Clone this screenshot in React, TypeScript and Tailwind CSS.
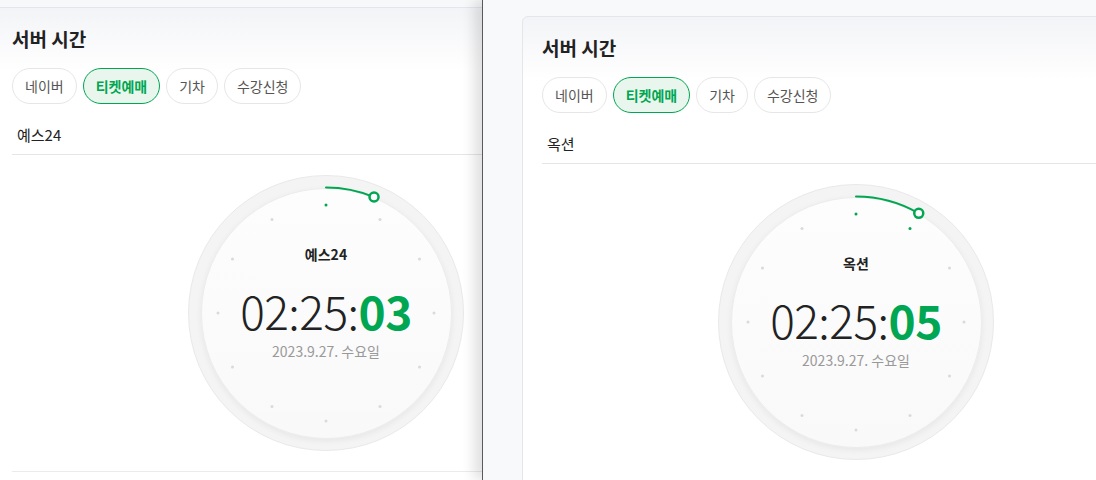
import React from "react";

const GREEN = "#00a651";

function Clock({ name, sec, angle, greens }: { name: string; sec: string; angle: number; greens: number }) {
  const c = 138;
  const ticks = Array.from({ length: 12 }, (_, i) => {
    const a = (i * 30 * Math.PI) / 180;
    return { x: c + 108 * Math.sin(a), y: c - 108 * Math.cos(a), g: i < greens };
  });
  const R = 125.5;
  const ra = (angle * Math.PI) / 180;
  const ex = c + R * Math.sin(ra);
  const ey = c - R * Math.cos(ra);
  return (
    <div className="relative w-[276px] h-[276px]">
      <div className="w-[276px] h-[276px] rounded-full bg-[#f4f4f4] border border-[#e9e9e9] flex items-center justify-center">
        <div className="w-[251px] h-[251px] rounded-full bg-[linear-gradient(to_bottom,#fdfdfd,#f9f9f9)] border border-[#ececec] shadow-[0_2px_6px_rgba(0,0,0,0.06)] flex flex-col items-center justify-center pb-[21px]">
          <div className="h-5 leading-5 text-[14px] font-bold text-[#222]">{name}</div>
          <div className="mt-[24px] h-[44px] leading-[44px] text-[46px] text-[#222] font-light tracking-[-0.5px] font-['Noto_Sans_CJK_KR',sans-serif]">
            02:25:<span className="font-bold" style={{ color: GREEN }}>{sec}</span>
          </div>
          <div className="mt-[9px] h-5 leading-5 text-[14px] text-[#999]">2023.9.27. 수요일</div>
        </div>
      </div>
      <svg className="absolute inset-0 pointer-events-none" width="276" height="276" viewBox="0 0 276 276">
        {ticks.map((t, i) => (
          <circle key={i} cx={t.x} cy={t.y} r={1.5} fill={t.g ? GREEN : "#dadada"} />
        ))}
        <path d={`M ${c} ${c - R} A ${R} ${R} 0 0 1 ${ex} ${ey}`} fill="none" stroke={GREEN} strokeWidth={2} strokeLinecap="round" />
        <circle cx={ex} cy={ey} r={4.5} fill="#ffffff" stroke={GREEN} strokeWidth={2.5} />
      </svg>
    </div>
  );
}

function Page({ name, sec, angle, greens }: { name: string; sec: string; angle: number; greens: number }) {
  const chips = ["네이버", "티켓예매", "기차", "수강신청"];
  return (
    <div className="pt-4 pl-[39px]">
      <div className="w-[668px] rounded-tl-md border border-[#e4e6ea] bg-[linear-gradient(to_bottom,#f3f4f7,#ffffff_64px)] px-[19px] pt-[19px]">
        <div className="text-[19px] leading-6 font-bold text-[#222]">서버 시간</div>
        <div className="mt-[17px] flex gap-1.5">
          {chips.map((c) =>
            c === "티켓예매" ? (
              <div key={c} className="h-9 px-3 rounded-full border border-[#00a651] bg-[#e9f6ee] text-[#00a651] font-bold text-[14px] flex items-center">
                {c}
              </div>
            ) : (
              <div key={c} className="h-9 px-3 rounded-full border border-[#e6e6e6] bg-white text-[#555] text-[14px] flex items-center">
                {c}
              </div>
            )
          )}
        </div>
        <div className="mt-3 h-[39px] flex items-center pl-[5px] border-b border-[#e5e5e5] text-[15px] text-[#222]">{name}</div>
        <div className="mt-5 flex justify-center">
          <Clock name={name} sec={sec} angle={angle} greens={greens} />
        </div>
        <div className="h-[21px] border-b border-[#ebebeb]" />
        <div className="h-10" />
      </div>
    </div>
  );
}

export default function App() {
  return (
    <div className="relative w-[1096px] h-[480px] overflow-hidden bg-[#f7f8fa] font-['Noto_Sans_CJK_KR',sans-serif]">
      <div className="absolute left-0 top-0 w-[482px] h-[480px] overflow-hidden bg-[#f7f8fa]">
        <div className="ml-[-47px] mt-[-9px] w-[800px]">
          <Page name="예스24" sec="03" angle={22.5} greens={1} />
        </div>
      </div>
      <div className="absolute left-[482px] top-0 w-[614px] h-[480px] overflow-hidden bg-[#f8f9fb] border-l border-[#5a5a5a] shadow-[-8px_0_12px_rgba(0,0,0,0.12)]">
        <Page name="옥션" sec="05" angle={30} greens={2} />
      </div>
    </div>
  );
}
